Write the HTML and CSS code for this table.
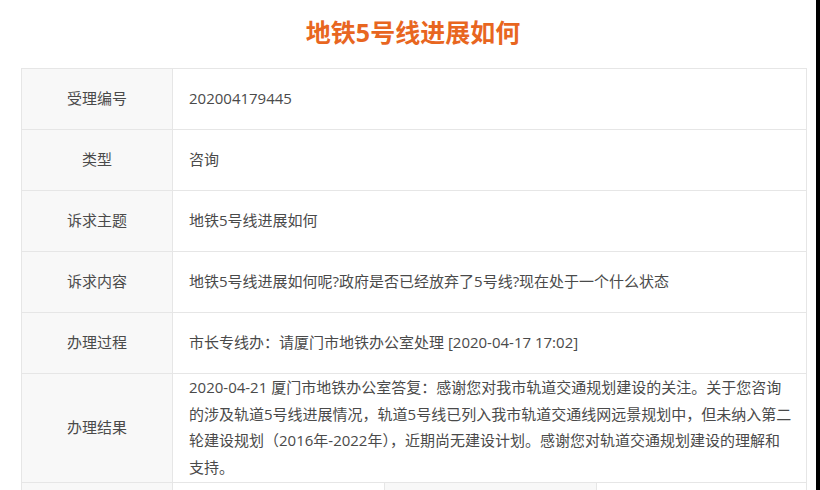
FILE: index.html
```html
<!DOCTYPE html>
<html>
<head>
    <meta charset="utf-8">
    <title>地铁5号线进展如何</title>
    <link rel="stylesheet" href="styles.css">
</head>
<body>
    <div class="page">
        <div class="content">
            <h1 class="title">地铁5号线进展如何</h1>
            <table class="detail">
                <colgroup>
                    <col class="col-label">
                    <col class="col-a">
                    <col class="col-b">
                    <col>
                </colgroup>
                <tr>
                    <th>受理编号</th>
                    <td colspan="3">202004179445</td>
                </tr>
                <tr>
                    <th>类型</th>
                    <td colspan="3">咨询</td>
                </tr>
                <tr>
                    <th>诉求主题</th>
                    <td colspan="3">地铁5号线进展如何</td>
                </tr>
                <tr>
                    <th>诉求内容</th>
                    <td colspan="3">地铁5号线进展如何呢?政府是否已经放弃了5号线?现在处于一个什么状态</td>
                </tr>
                <tr>
                    <th>办理过程</th>
                    <td colspan="3">市长专线办：请厦门市地铁办公室处理 [2020-04-17 17:02]</td>
                </tr>
                <tr>
                    <th>办理结果</th>
                    <td colspan="3" class="long">2020-04-21 厦门市地铁办公室答复：感谢您对我市轨道交通规划建设的关注。关于您咨询<br>的涉及轨道5号线进展情况，轨道5号线已列入我市轨道交通线网远景规划中，但未纳入第二<br>轮建设规划（2016年-2022年），近期尚无建设计划。感谢您对轨道交通规划建设的理解和<br>支持。</td>
                </tr>
                <tr>
                    <th></th>
                    <td></td>
                    <th></th>
                    <td></td>
                </tr>
            </table>
        </div>
        <div class="edge"></div>
    </div>
</body>
</html>
```

FILE: styles.css
```css
html, body {
    margin: 0;
    padding: 0;
    background-color: #fff;
    height: 100%;
    overflow: hidden;
}

body {
    font-family: "Open Sans", "Noto Sans CJK SC", sans-serif;
    color: #4a4a4a;
}

.page {
    display: flex;
    height: 100%;
}

.content {
    flex: 1;
}

.edge {
    width: 4px;
    background-color: #000;
}

.title {
    margin: 0 0 20px 0;
    padding: 16px 0 0 10px;
    text-align: center;
    font-size: 25px;
    line-height: 32px;
    font-weight: bold;
    color: #e8661f;
    font-family: "Open Sans", "Noto Sans CJK SC", sans-serif;
}

.detail {
    margin-left: 21px;
    width: 786px;
    table-layout: fixed;
    border-collapse: collapse;
    font-size: 15px;
}

.col-label {
    width: 151px;
}

.col-a,
.col-b {
    width: 212px;
}

.detail th,
.detail td {
    border: 1px solid #e6e6e6;
    height: 61px;
    padding: 0 16px 2px 16px;
    line-height: 26.5px;
    box-sizing: border-box;
}

.detail th {
    background-color: #f8f8f8;
    font-weight: normal;
    text-align: center;
    color: #4a4a4a;
}

.detail td {
    text-align: left;
    white-space: nowrap;
}
```
